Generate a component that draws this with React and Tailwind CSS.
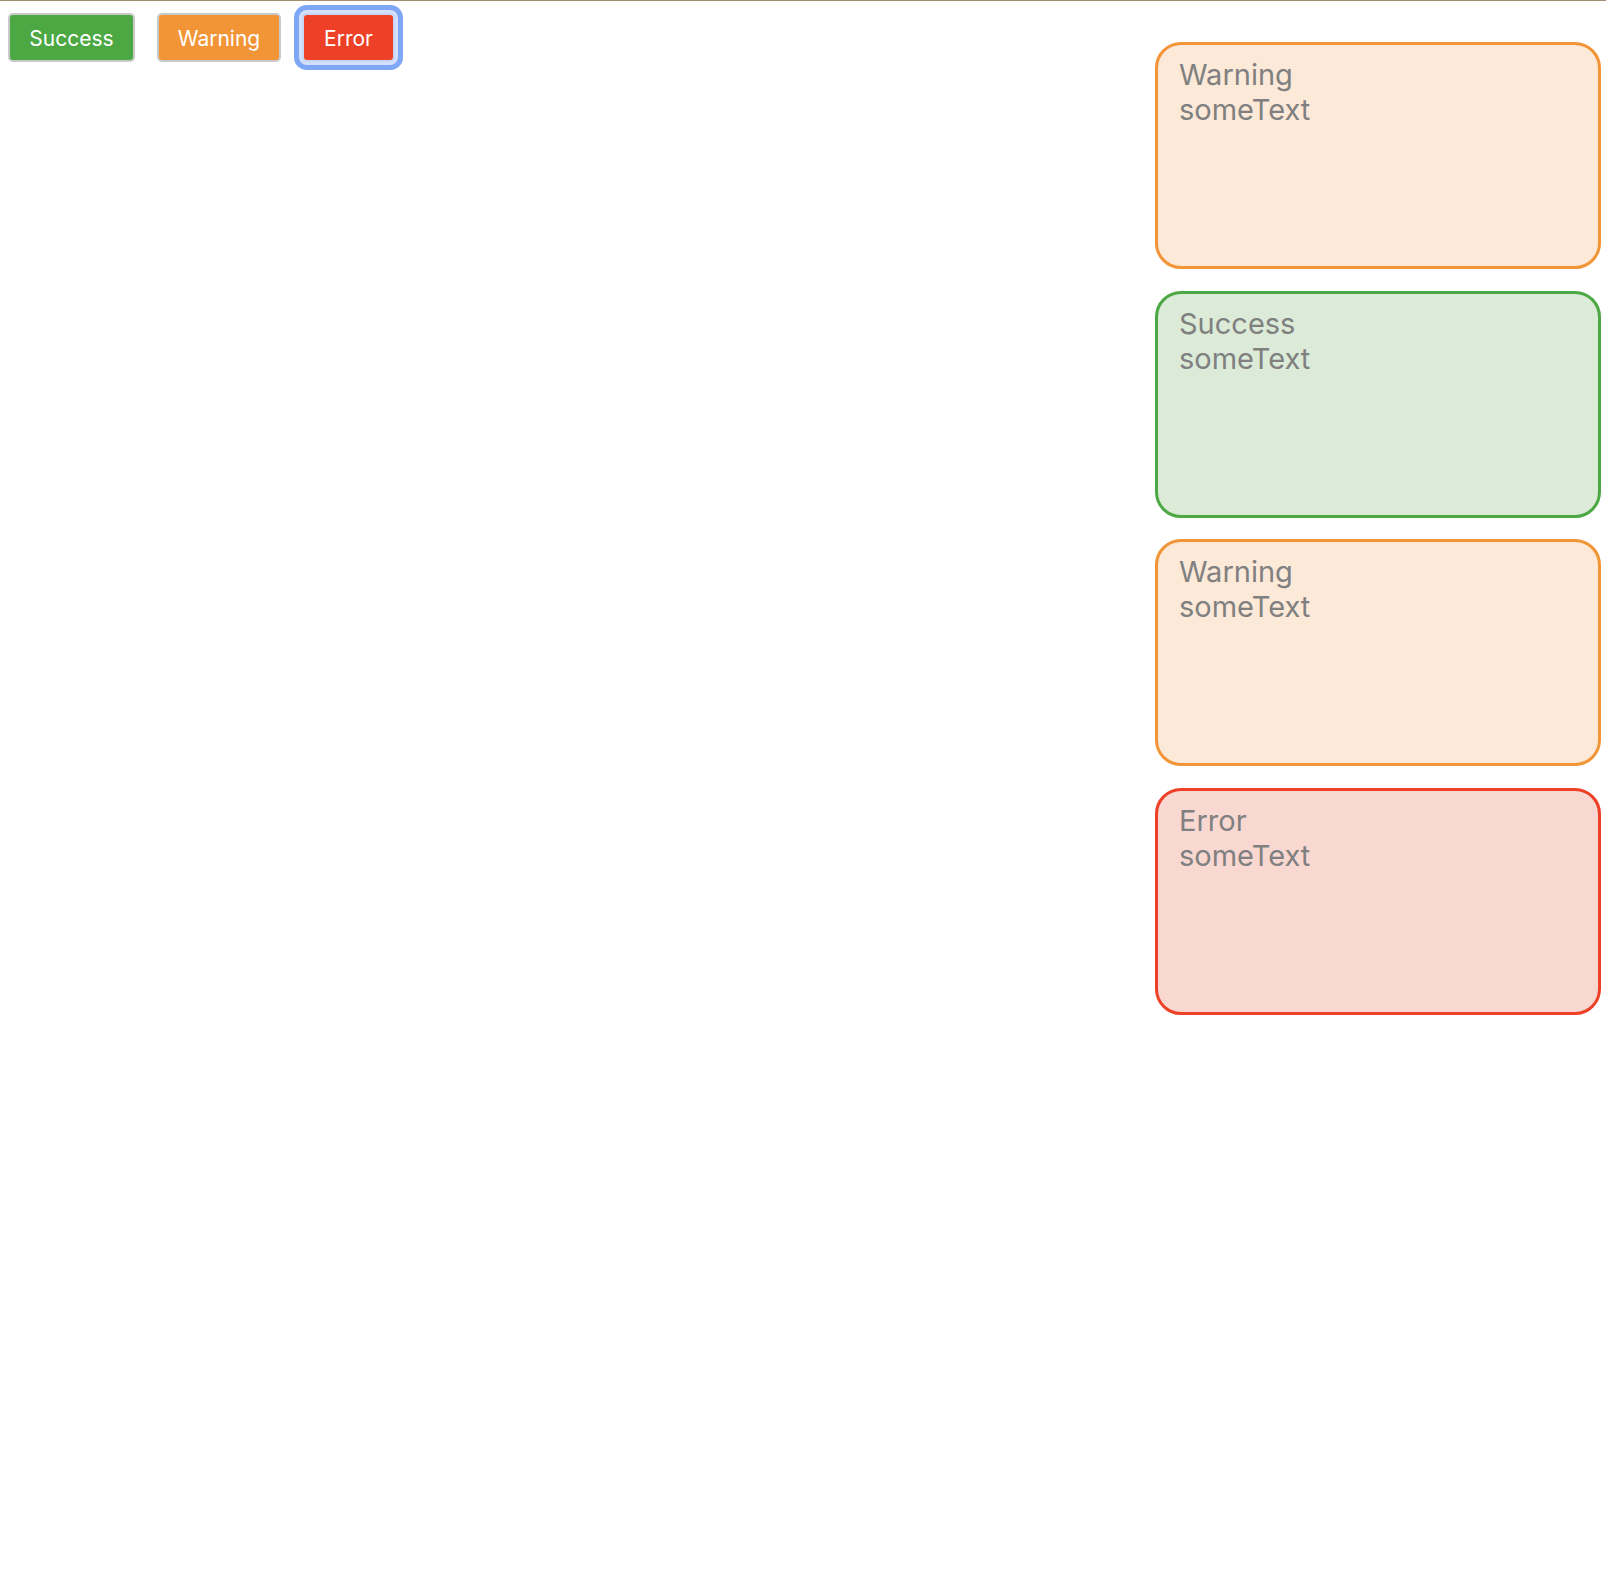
import React from "react";

const buttons = [
  { label: "Success", cls: "w-[127px] bg-[#4ca843] border-[#c9c9c9]" },
  { label: "Warning", cls: "w-[124px] ml-[22px] bg-[#f19537] border-[#c9c9c9]" },
  {
    label: "Error",
    cls: "w-[93px] ml-[21px] bg-[#ee4027] border-[#c7d6f5] shadow-[0_0_0_3px_#d3e0fb,0_0_0_8px_#7ea8f6]",
  },
];

const toasts = [
  { title: "Warning", cls: "bg-[#fce9d8] border-[#f19537]" },
  { title: "Success", cls: "bg-[#dbebd8] border-[#4ca843]" },
  { title: "Warning", cls: "bg-[#fce9d8] border-[#f19537]" },
  { title: "Error", cls: "bg-[#f9d8d2] border-[#ee4027]" },
];

export default function App() {
  return (
    <div className="min-h-[1596px] bg-white font-['Inter','Liberation_Sans',sans-serif]">
      <div className="h-px bg-[#a38f6e]" />
      <div className="flex items-start justify-between">
        {/* trigger buttons */}
        <div className="flex pl-[8px] pt-[12px]">
          {buttons.map((b) => (
            <button
              key={b.label}
              className={`h-[49px] flex items-center justify-center rounded-[5px] border-2 pt-[2px] text-white text-[21px] ${b.cls}`}
            >
              {b.label}
            </button>
          ))}
        </div>

        {/* toast stack */}
        <div className="flex flex-col gap-[21.5px] pt-[41px] pr-[5px]">
          {toasts.map((t, i) => (
            <div
              key={i}
              className={`w-[446px] h-[227px] rounded-[26px] border-[3px] pl-[21px] pt-[12px] text-[#808080] text-[29px] leading-[35px] ${t.cls}`}
            >
              <div>{t.title}</div>
              <div>someText</div>
            </div>
          ))}
        </div>
      </div>
    </div>
  );
}
